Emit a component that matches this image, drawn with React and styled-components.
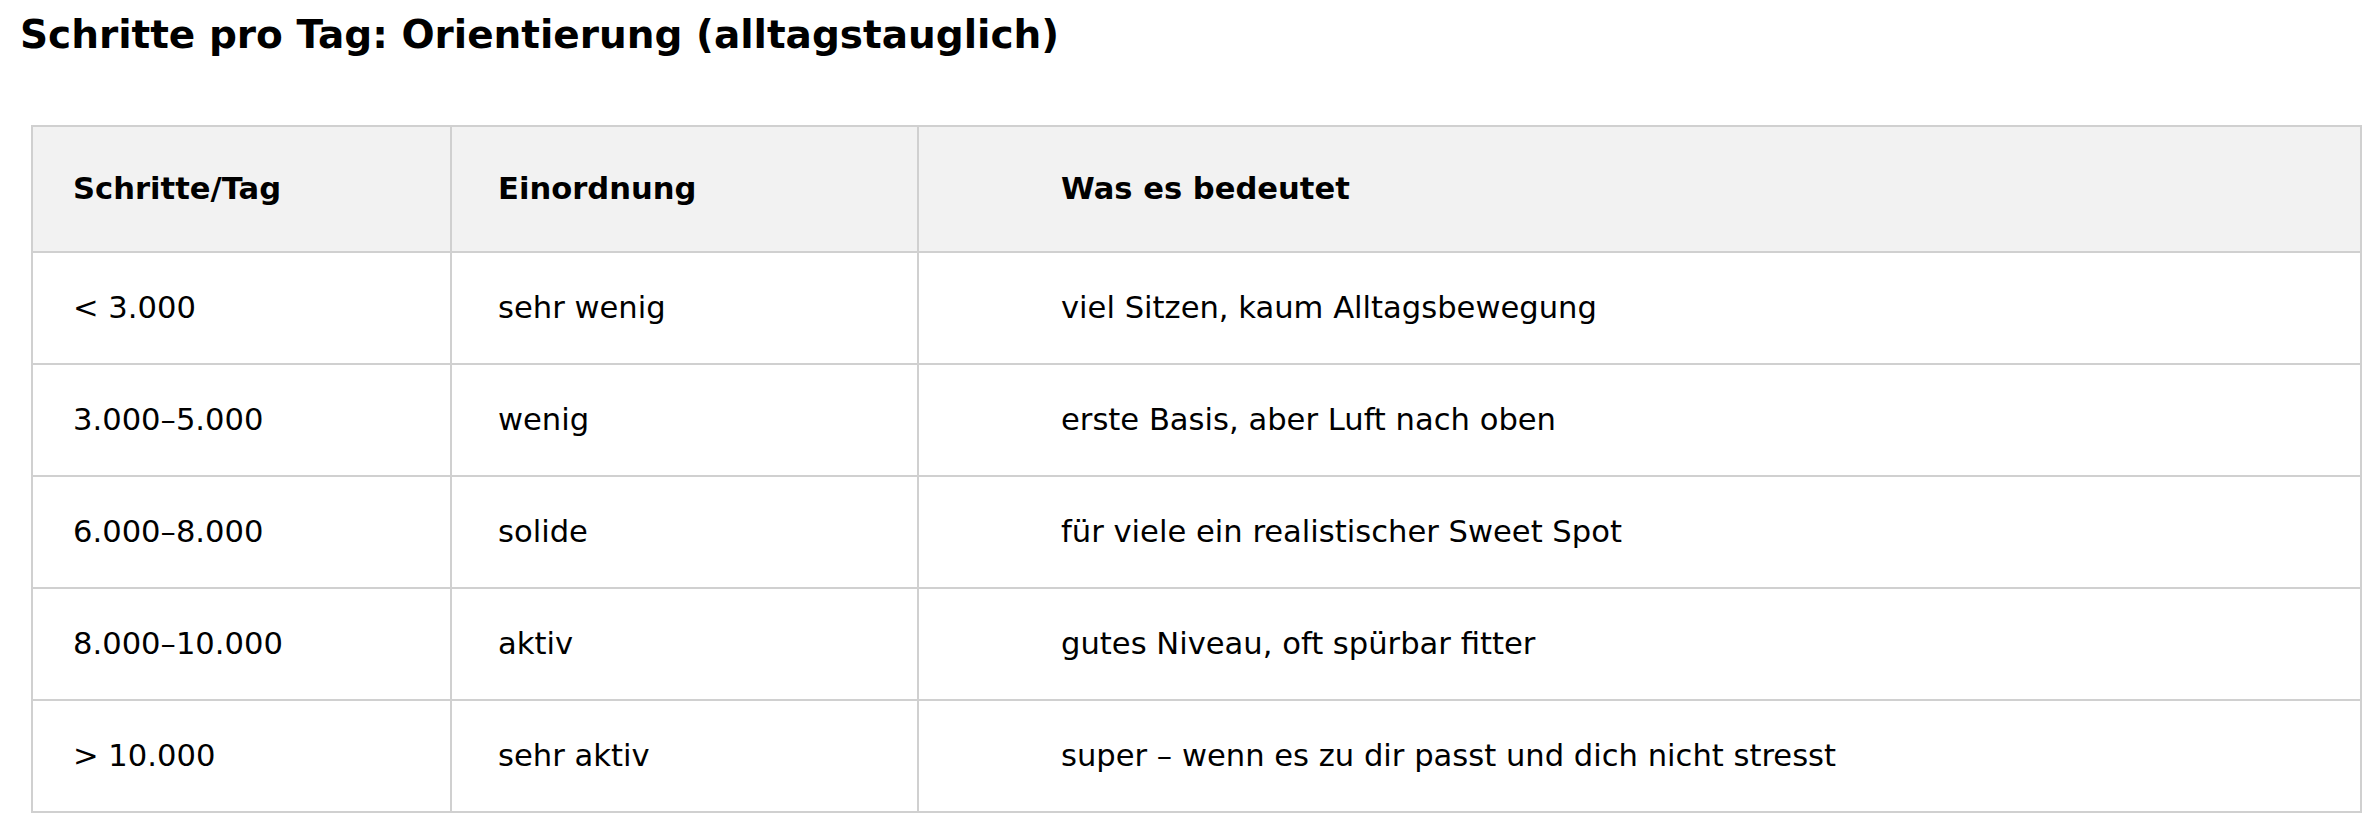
import React from "react";
import styled, { createGlobalStyle } from "styled-components";

const GlobalStyle = createGlobalStyle`
  body {
    margin: 0;
    background: #fff;
    font-family: "DejaVu Sans", "Liberation Sans", sans-serif;
    color: #000;
  }
`;

const rows = [
  ["< 3.000", "sehr wenig", "viel Sitzen, kaum Alltagsbewegung"],
  ["3.000–5.000", "wenig", "erste Basis, aber Luft nach oben"],
  ["6.000–8.000", "solide", "für viele ein realistischer Sweet Spot"],
  ["8.000–10.000", "aktiv", "gutes Niveau, oft spürbar fitter"],
  ["> 10.000", "sehr aktiv", "super – wenn es zu dir passt und dich nicht stresst"],
];

const columns = [
  { width: 419, pad: 40 },
  { width: 467, pad: 46 },
  { width: 1443, pad: 142 },
];

const App = () => {
  return (
    <Page>
      <GlobalStyle />
      <Title>Schritte pro Tag: Orientierung (alltagstauglich)</Title>
      <Table>
        <colgroup>
          {columns.map((c, i) => (
            <col key={i} style={{ width: c.width }} />
          ))}
        </colgroup>
        <thead>
          <tr>
            <HeadCell $pad={columns[0].pad}>Schritte/Tag</HeadCell>
            <HeadCell $pad={columns[1].pad}>Einordnung</HeadCell>
            <HeadCell $pad={columns[2].pad}>Was es bedeutet</HeadCell>
          </tr>
        </thead>
        <tbody>
          {rows.map((r) => (
            <tr key={r[0]}>
              {r.map((text, i) => (
                <Cell key={i} $pad={columns[i].pad}>
                  {text}
                </Cell>
              ))}
            </tr>
          ))}
        </tbody>
      </Table>
    </Page>
  );
};

export default App;

const Page = styled.div`
  padding: 13px 20px 20px;
`;

const Title = styled.h2`
  margin: 0;
  font-size: 39px;
  line-height: 44px;
  font-weight: bold;
`;

const Table = styled.table`
  margin: 68px 0 0 11px;
  width: 2330px;
  table-layout: fixed;
  border-collapse: collapse;
  border: 2px solid #d0d0d0;
`;

const HeadCell = styled.th`
  text-align: left;
  font-size: 30.6px;
  line-height: 36px;
  font-weight: bold;
  padding: 44px 10px 44px ${(p) => p.$pad}px;
  background: #f2f2f2;
  border: 2px solid #d0d0d0;
`;

const Cell = styled.td`
  font-size: 30.6px;
  line-height: 36px;
  padding: 37px 10px 37px ${(p) => p.$pad}px;
  border: 2px solid #d0d0d0;
  white-space: nowrap;
`;
